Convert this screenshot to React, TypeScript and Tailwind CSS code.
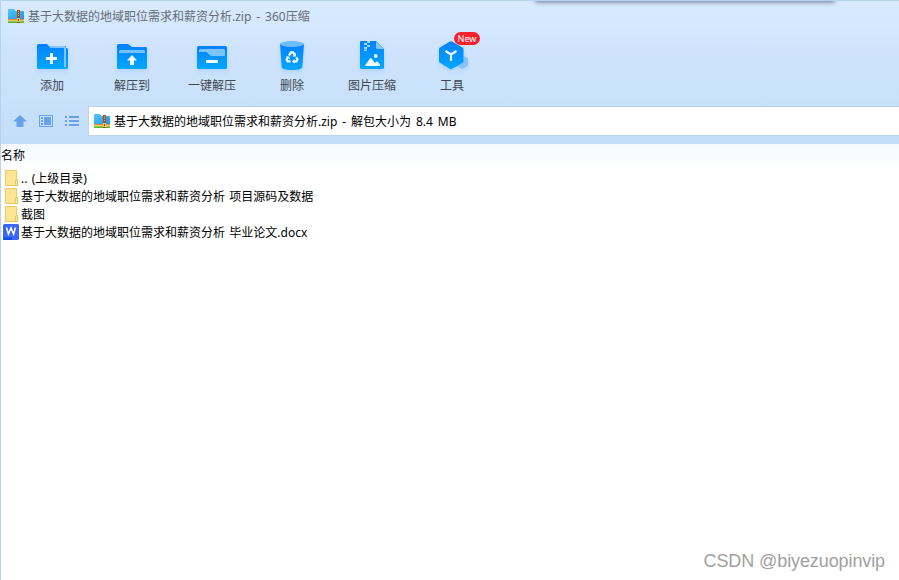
import React from "react";

const tools = [
  { label: "添加", icon: <AddIcon /> },
  { label: "解压到", icon: <ExtractIcon /> },
  { label: "一键解压", icon: <OneKeyIcon /> },
  { label: "删除", icon: <TrashIcon /> },
  { label: "图片压缩", icon: <ImageIcon /> },
  { label: "工具", icon: <CubeIcon />, badge: "New" },
];

const files = [
  { name: ".. (上级目录)", type: "folder" },
  { name: "基于大数据的地域职位需求和薪资分析 项目源码及数据", type: "folder" },
  { name: "截图", type: "folder" },
  { name: "基于大数据的地域职位需求和薪资分析 毕业论文.docx", type: "doc" },
];

// shared by all toolbar icons
function Gradients() {
  return (
    <svg className="absolute size-0">
      <defs>
        <linearGradient id="blue" x1="0" y1="0" x2="0" y2="1">
          <stop offset="0" stopColor="#0580ff" />
          <stop offset="1" stopColor="#00a8ff" />
        </linearGradient>
        <linearGradient id="zip" x1="0" y1="0" x2="1" y2="1">
          <stop offset="0" stopColor="#55c8fb" />
          <stop offset="1" stopColor="#1b93ea" />
        </linearGradient>
      </defs>
    </svg>
  );
}

function ToolSvg({ children }: { children: React.ReactNode }) {
  return (
    <svg viewBox="0 0 36 36" className="size-9 overflow-visible drop-shadow-[0_2px_2px_rgba(60,140,240,0.2)]">
      {children}
    </svg>
  );
}

function AddIcon() {
  return (
    <ToolSvg>
      <path d="M13 8h17v2h.5a1.5 1.500 0 0 1 1.500 1.500v18a1.500 1.500 0 0 1-1.500 1.500H26V10H13z" fill="url(#blue)" />
      <path d="M13 8h15.500A1.500 1.500 0 0 1 30 9.500V29h-2V10H13z" fill="#82c5ff" />
      <path d="M2.500 6H11l3.500 4H27a1 1 0 0 1 1 1v20H2.500A1.500 1.500 0 0 1 1 29.500v-22A1.500 1.500 0 0 1 2.500 6z" fill="url(#blue)" />
      <path d="M14 15h3v4h4v3h-4v4h-3v-4h-4v-3h4z" fill="#f2faff" />
    </ToolSvg>
  );
}

function ExtractIcon() {
  return (
    <ToolSvg>
      <path d="M2.500 6H12l4 3h13.500A1.500 1.500 0 0 1 31 10.500v19a1.500 1.500 0 0 1-1.500 1.500h-27A1.500 1.500 0 0 1 1 29.500v-22A1.500 1.500 0 0 1 2.500 6z" fill="url(#blue)" />
      <path d="M4.500 12h23a1.500 1.500 0 0 1 1.500 1.500V15H3v-1.500A1.500 1.500 0 0 1 4.500 12z" fill="#75c0ff" />
      <path d="M16 17l5 5.500h-3V27h-4v-4.500h-3z" fill="#f2faff" />
    </ToolSvg>
  );
}

function OneKeyIcon() {
  return (
    <ToolSvg>
      <rect x="1" y="8" width="30" height="23" rx="1.500" fill="url(#blue)" />
      <path d="M4.500 11h23a1.500 1.500 0 0 1 1.500 1.500V18H15.500c-1.500 0-2-1-3-2.200S11 14 9.500 14H3v-1.500A1.500 1.500 0 0 1 4.500 11z" fill="#7cc4ff" />
      <rect x="10" y="22" width="12" height="3" rx="1" fill="#f2faff" />
    </ToolSvg>
  );
}

function TrashIcon() {
  return (
    <ToolSvg>
      <path d="M4 6h24l-1.700 23c-.1 2-4.300 3-10.300 3s-10.200-1-10.300-3z" fill="url(#blue)" />
      <ellipse cx="16" cy="6" rx="12" ry="2.900" fill="#6dbdfa" />
      <g fill="none" stroke="#f2faff" strokeWidth="2.200">
        <path d="M13 17.600l1.900-3.200h2.200l1.400 2.400" />
        <path d="M20.300 19.200l1.200 2.200-1.100 2H17.500" />
        <path d="M14.600 23.400h-3l-1-1.900 1.400-2.600" />
      </g>
      <path d="M20 14.800v3.700h-3.600zM18.500 21.200v4.500l-2.500-2.300zM9.800 18.200l3.600.2.400 3z" fill="#f2faff" />
    </ToolSvg>
  );
}

function ImageIcon() {
  return (
    <ToolSvg>
      <path d="M5.500 3H20l8 8v18.500a1.500 1.500 0 0 1-1.500 1.500h-21A1.500 1.500 0 0 1 4 29.500v-25A1.500 1.500 0 0 1 5.500 3z" fill="url(#blue)" />
      <path d="M20 3l8 8h-6.500a1.500 1.500 0 0 1-1.500-1.500z" fill="#84c8ff" />
      <path d="M11 3h3v2h-3zM8 5h3v2H8zM11 7h3v2h-3zM8 9h3v2H8zM8 11.500h3V13H8z" fill="#a5d7ff" />
      <circle cx="19.700" cy="18" r="1.900" fill="#f2faff" />
      <path d="M9 27.500l5-7 1.200-.5 3.800 5 1.500-1.500h1l2.500 3v1.500H9z" fill="#f2faff" />
    </ToolSvg>
  );
}

function CubeIcon() {
  return (
    <ToolSvg>
      <path d="M26 17l6 3.200v7.300L26 31l-6-3.500v-7.300z" fill="#86c3fc" />
      <path d="M14 3.500q1-.5 2 0l10.500 6q1 .6 1 1.700v12q0 1-1 1.600L16 31q-1 .5-2 0L4 24.800q-1-.6-1-1.600v-12q0-1.100 1-1.700z" fill="url(#blue)" />
      <path d="M9.500 13l5.500 3.500 5.500-3.500M15 16v7" fill="none" stroke="#f2faff" strokeWidth="2.200" />
    </ToolSvg>
  );
}

function ZipIcon() {
  return (
    <svg viewBox="0 0 16 16" className="size-4 shrink-0">
      <path d="M.5 1H6l1.500 2H15a1 1 0 0 1 1 1v8H0V1.500z" fill="url(#zip)" />
      <path d="M0 11h16v1.500H0z" fill="#f5823c" />
      <path d="M0 12.300h16v1H0z" fill="#f6d33c" />
      <path d="M0 13.300h16V15H0z" fill="#58b82e" />
      <path d="M9 2h3v13H9z" fill="#a14f16" />
      <path d="M10 3h1v1h-1zM10 5h1v1h-1zM10 7h1v1h-1z" fill="#e9b56d" />
      <path d="M9 10h3v4H9z" fill="#f3c56b" />
      <path d="M10 11h1v2h-1z" fill="#8b4513" />
    </svg>
  );
}

function FolderIcon() {
  return (
    <svg viewBox="0 0 16 18" className="h-[18px] w-4 shrink-0">
      <path d="M2.500 1.500h11v9h1v6h-12z" fill="#fee593" stroke="#eccb64" />
      <path d="M12.500 16.500v-5.500h2v5.500z" fill="#ffedac" stroke="#e3bd4c" strokeWidth=".8" />
    </svg>
  );
}

function DocIcon() {
  return (
    <svg viewBox="0 0 16 16" className="size-4 shrink-0">
      <rect width="16" height="16" rx="1.500" fill="#3b67fb" />
      <path d="M0 13.500h9V16H1.500A1.500 1.500 0 0 1 0 14.500z" fill="#0d4ddf" />
      <path d="M3.500 3.500l1.900 6.500L8 4l2.600 6 1.900-6.500" fill="none" stroke="#fff" strokeWidth="1.500" />
    </svg>
  );
}

export default function App() {
  return (
    <div className="relative flex h-[580px] w-[899px] flex-col overflow-hidden border-t border-l border-[#b5d2ef] bg-white font-['Noto_Sans','Noto_Sans_CJK_SC',sans-serif] text-xs text-black">
      <Gradients />
      {/* edge of the window sitting above */}
      <div className="absolute -top-[5px] left-[535px] h-[5px] w-[298px] shadow-[0_0_5px_1px_rgba(65,80,95,0.75)]" />

      <div className="h-[143px] shrink-0 bg-linear-to-b from-[#d8ebff] via-[#cfe4fc] via-35% to-[#c3def9]">
        <div className="flex h-[30px] items-center pl-[7px] text-[#656d76]">
          <ZipIcon />
          <span className="mt-0.5 ml-1 whitespace-pre [word-spacing:1.8px]">基于大数据的地域职位需求和薪资分析.zip - 360压缩</span>
        </div>

        <div className="flex h-[76px] pl-[11px]">
          {tools.map((tool) => (
            <button key={tool.label} className="relative flex w-20 flex-col items-center pt-[7px] text-[#40474f]">
              <div className="pl-1">{tool.icon}</div>
              <span className="mt-[3px] leading-[18px]">{tool.label}</span>
              {tool.badge && (
                <span className="absolute top-px left-[42px] flex h-[13px] w-[26px] items-center justify-center rounded-full bg-[#f5222d] text-[9px] text-white">
                  {tool.badge}
                </span>
              )}
            </button>
          ))}
        </div>

        <div className="flex h-[28px] items-center pl-3">
          <svg viewBox="0 0 14 14" className="size-3.5" fill="#69a2eb">
            <path d="M7 1l7 6.500h-3.500V13h-7V7.500H0z" />
          </svg>
          <svg viewBox="0 0 14 12" className="ml-3 h-3 w-3.5" fill="#69a2eb">
            <path d="M0 0h14v12H0zM1 1v10h12V1z" fillRule="evenodd" />
            <path d="M2 2h2v2H2zM2 5h2v2H2zM2 8h2v2H2zM5 2h7v8H5z" />
          </svg>
          <svg viewBox="0 0 14 12" className="ml-3 h-3 w-3.5" fill="#69a2eb">
            <path d="M0 1h2v2H0zM4 1h10v2H4zM0 5h2v2H0zM4 5h10v2H4zM0 9h2v2H0zM4 9h10v2H4z" />
          </svg>
          <div className="ml-[9px] flex h-[30px] flex-1 items-center border-y border-l border-[#b9d5f2] bg-white pl-[5px]">
            <ZipIcon />
            <span className="mt-0.5 ml-1 whitespace-pre [word-spacing:1.8px]">基于大数据的地域职位需求和薪资分析.zip - 解包大小为 8.4 MB</span>
          </div>
        </div>
      </div>

      <div className="flex h-[25px] shrink-0 items-center bg-linear-to-b from-[#f3f9ff] to-white pb-px">名称</div>

      <div>
        {files.map((file) => (
          <div key={file.name} className="flex h-[18px] items-center pl-0.5">
            {file.type === "folder" ? <FolderIcon /> : <DocIcon />}
            <span className="mt-0.5 ml-0.5 whitespace-pre [word-spacing:1.2px]">{file.name}</span>
          </div>
        ))}
      </div>

      <div className="absolute right-[14px] bottom-[7px] font-['Liberation_Sans',sans-serif] text-[18px] leading-6 tracking-[-0.1px] text-[#a0a0a0]">
        CSDN @biyezuopinvip
      </div>
    </div>
  );
}
